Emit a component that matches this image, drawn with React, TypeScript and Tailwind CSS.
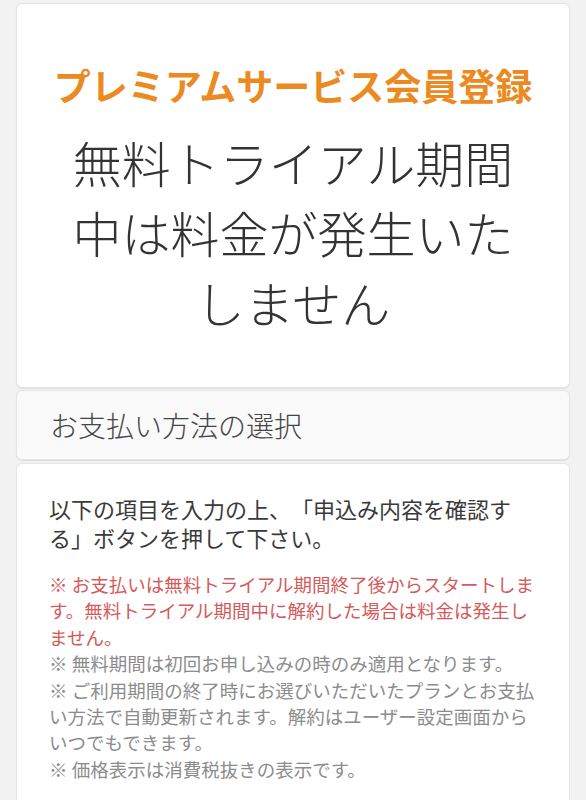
import React from "react";

export default function App() {
  return (
    <div
      className="min-h-[800px] w-full bg-[#f2f2f2] px-4 pt-[3px] pb-6 [text-spacing-trim:space-all]"
      style={{ fontFamily: '"Noto Sans CJK JP", "Noto Sans", sans-serif' }}
    >
      {/* Hero card */}
      <div className="rounded-[6px] border border-[#e4e4e4] bg-white pt-[57px] pb-[50px] shadow-[0_1px_1px_rgba(0,0,0,0.08)]">
        <h1 className="px-[20px] text-center text-[37px] font-bold leading-[48px] text-[#ec8a22]">
          プレミアムサービス会員登録
        </h1>
        <p className="mt-[18px] px-[40px] text-center text-[49px] font-light leading-[70px] text-[#333333]">
          無料トライアル期間中は料金が発生いたしません
        </p>
      </div>

      {/* Section header */}
      <div className="mt-[2px] flex h-[70px] items-center rounded-[6px] border border-[#e4e4e4] bg-[#fafafa] px-[33px] shadow-[0_1px_1px_rgba(0,0,0,0.08)]">
        <h2 className="text-[28px] font-light leading-[40px] text-[#444444]">
          お支払い方法の選択
        </h2>
      </div>

      {/* Body card */}
      <div className="mt-[3px] rounded-[6px] border border-[#e4e4e4] bg-white px-[32px] pt-[30px] pb-[40px]">
        <p className="text-[22px] leading-[29px] text-[#3a3a3a] [text-spacing-trim:space-all]">
          以下の項目を入力の上、「申込み内容を確認する」ボタンを押して下さい。
        </p>
        <div className="mt-[19px] text-[18.5px] leading-[26.4px]">
          <p className="text-[#d45a5c]">
            ※ お支払いは無料トライアル期間終了後からスタートします。無料トライアル期間中に解約した場合は料金は発生しません。
          </p>
          <p className="text-[#8c8c8c]">※ 無料期間は初回お申し込みの時のみ適用となります。</p>
          <p className="text-[#8c8c8c]">
            ※ ご利用期間の終了時にお選びいただいたプランとお支払い方法で自動更新されます。解約はユーザー設定画面からいつでもできます。
          </p>
          <p className="text-[#8c8c8c]">※ 価格表示は消費税抜きの表示です。</p>
        </div>
      </div>
    </div>
  );
}
